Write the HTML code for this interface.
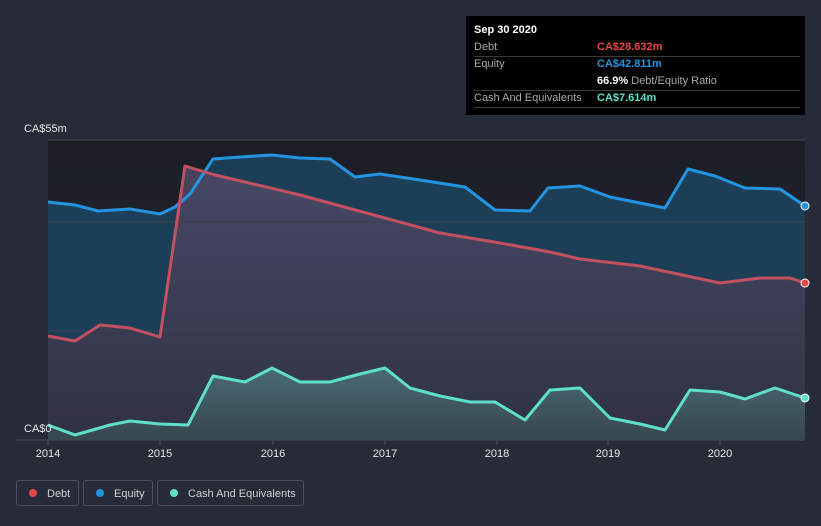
<!DOCTYPE html>
<html><head><style>
body{margin:0;width:821px;height:526px;background:#262b37;font-family:"Liberation Sans",sans-serif;overflow:hidden;position:relative}
.tt{position:absolute;left:466px;top:16px;width:339px;height:99px;background:#000;color:#fff;font-size:11px}
.tt .r{position:absolute;left:8px;width:326px;border-bottom:1px solid #3a3a3a;height:17px;line-height:17px}
.lbl{color:#aaa}
.v{position:absolute;left:123px;top:0;font-weight:bold}
.leg{position:absolute;top:480px;height:26px;border:1px solid #4a505c;border-radius:3px;color:#cdd0d6;font-size:11px;line-height:26px;box-sizing:border-box;white-space:nowrap;overflow:hidden}
.leg i{display:inline-block;width:8px;height:8px;border-radius:50%;margin:0 10px 0 12px;vertical-align:0}
</style></head><body>
<svg width="821" height="526" style="position:absolute;left:0;top:0">
<defs>
<linearGradient id="bg" x1="0" y1="0" x2="0" y2="1"><stop offset="0" stop-color="#1b1e26"/><stop offset="1" stop-color="#272b39"/></linearGradient>
<linearGradient id="dg" x1="0" y1="0" x2="0" y2="1"><stop offset="0" stop-color="#4e4a68"/><stop offset="1" stop-color="#33303f"/></linearGradient>
<linearGradient id="cg" x1="0" y1="0" x2="0" y2="1"><stop offset="0" stop-color="#4a6a72"/><stop offset="1" stop-color="#37464f"/></linearGradient>
</defs>
<rect x="48" y="140" width="757" height="300" fill="url(#bg)"/>
<path d="M48,202 L75,205 98,211 130,209 160,214 175,207 190,194 213,159 240,157 272,155 300,158 330,159 355,177 380,174 420,180 465,187 495,210 530,211 548,188 580,186 610,197 640,203 665,208 688,169 715,176 745,188 780,189 805,206 L805,440 48,440Z" fill="#1d3e57"/>
<path d="M48,336 L75,341 100,325 130,328 160,337 185,166 215,175 245,182 300,195 385,218 440,233 500,243 550,252 580,259 640,266 720,283 760,278 790,278 805,283 L805,440 48,440Z" fill="url(#dg)" opacity="0.85"/>
<line x1="48" y1="140" x2="805" y2="140" stroke="#4a4f5a"/>
<line x1="48" y1="222" x2="805" y2="222" stroke="#3a4050"/>
<line x1="48" y1="331" x2="805" y2="331" stroke="#3a4050"/>
<line x1="16" y1="440" x2="805" y2="440" stroke="#4a4f5a"/>
<path d="M48,425 L75,435 110,425 130,421 160,424 188,425 213,376 245,382 272,368 300,382 330,382 360,374 385,368 410,388 440,396 470,402 495,402 525,420 550,390 580,388 610,418 640,424 665,430 690,390 720,392 745,399 775,388 805,398 L805,440 48,440Z" fill="url(#cg)"/>
<g fill="none" stroke-width="3" stroke-linejoin="round">
<path d="M48,202 L75,205 98,211 130,209 160,214 175,207 190,194 213,159 240,157 272,155 300,158 330,159 355,177 380,174 420,180 465,187 495,210 530,211 548,188 580,186 610,197 640,203 665,208 688,169 715,176 745,188 780,189 805,206" stroke="#2394df"/>
<path d="M48,336 L75,341 100,325 130,328 160,337 185,166 215,175 245,182 300,195 385,218 440,233 500,243 550,252 580,259 640,266 720,283 760,278 790,278 805,283" stroke="#c2505f"/>
<path d="M48,425 L75,435 110,425 130,421 160,424 188,425 213,376 245,382 272,368 300,382 330,382 360,374 385,368 410,388 440,396 470,402 495,402 525,420 550,390 580,388 610,418 640,424 665,430 690,390 720,392 745,399 775,388 805,398" stroke="#5ee0c8"/>
</g>
<circle cx="805" cy="206" r="4" fill="#2394df" stroke="#fff"/>
<circle cx="805" cy="283" r="4" fill="#e64848" stroke="#fff"/>
<circle cx="805" cy="398" r="4" fill="#5ee0c8" stroke="#fff"/>
<g stroke="#4a4f5a"><line x1="48" y1="440" x2="48" y2="445"/><line x1="160" y1="440" x2="160" y2="445"/><line x1="273" y1="440" x2="273" y2="445"/><line x1="385" y1="440" x2="385" y2="445"/><line x1="497" y1="440" x2="497" y2="445"/><line x1="608" y1="440" x2="608" y2="445"/><line x1="720" y1="440" x2="720" y2="445"/></g>
<g fill="#e6e8ec" font-size="11" font-family="Liberation Sans,sans-serif" text-anchor="middle">
<text x="48" y="457">2014</text><text x="160" y="457">2015</text><text x="273" y="457">2016</text><text x="385" y="457">2017</text><text x="497" y="457">2018</text><text x="608" y="457">2019</text><text x="720" y="457">2020</text>
<text x="24" y="132" text-anchor="start">CA$55m</text><text x="24" y="432" text-anchor="start">CA$0</text>
</g>
</svg>
<div class="tt">
<div style="position:absolute;left:8px;top:8px;font-weight:bold;font-size:11px">Sep 30 2020</div>
<div class="r" style="top:23px"><span class="lbl">Debt</span><span class="v" style="color:#e64848">CA$28.632m</span></div>
<div class="r" style="top:40px;border:none"><span class="lbl">Equity</span><span class="v" style="color:#2394df">CA$42.811m</span></div>
<div class="r" style="top:57px"><span class="v" style="color:#fff">66.9% <span style="color:#aaa;font-weight:normal">Debt/Equity Ratio</span></span></div>
<div class="r" style="top:74px"><span class="lbl">Cash And Equivalents</span><span class="v" style="color:#5ee0c8">CA$7.614m</span></div>
</div>
<div class="leg" style="left:16px;width:63px"><i style="background:#e64848"></i>Debt</div>
<div class="leg" style="left:83px;width:70px"><i style="background:#2394df"></i>Equity</div>
<div class="leg" style="left:157px;width:147px"><i style="background:#5ee0c8"></i>Cash And Equivalents</div>
</body></html>
